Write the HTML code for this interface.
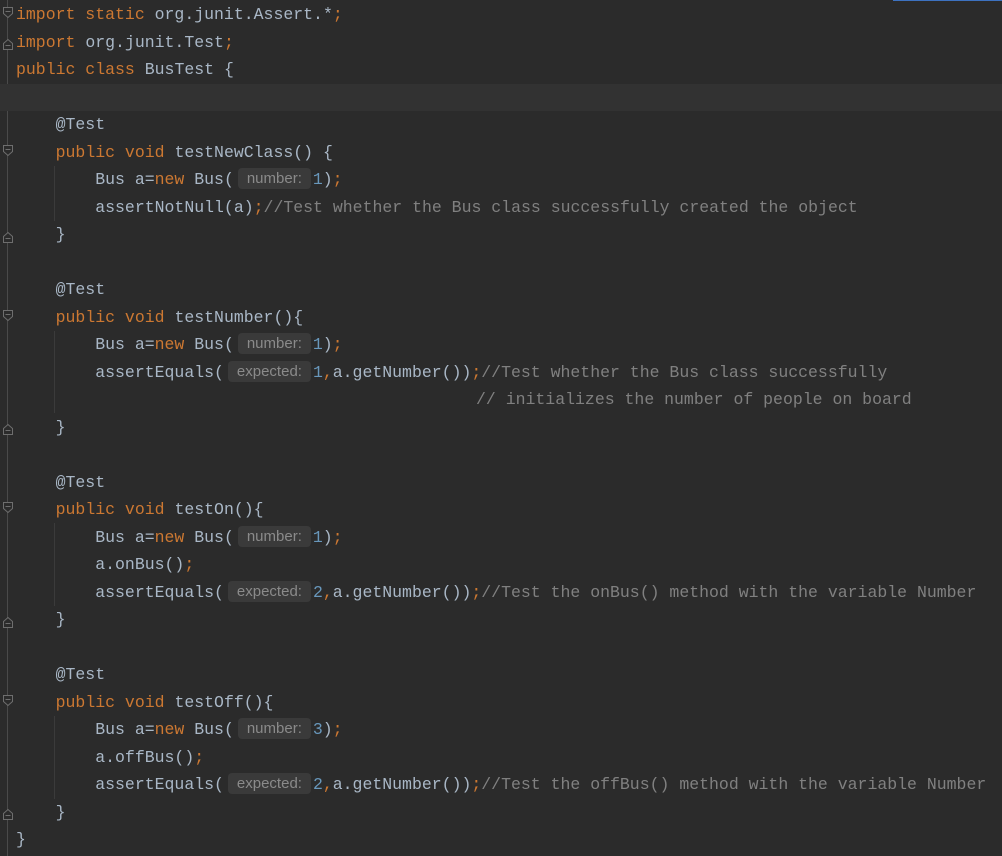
<!DOCTYPE html>
<html><head><meta charset="utf-8"><style>
html,body{margin:0;padding:0;background:#2b2b2b;width:1002px;height:856px;overflow:hidden}
#ed{position:absolute;left:0;top:1px;width:1002px;font-family:"Liberation Mono","DejaVu Sans Mono",monospace;font-size:16.5px;color:#a9b7c6}
.l{height:27.5px;line-height:27.5px;white-space:pre;padding-left:16px;position:relative}
.hl{background:#323232}
.k{color:#cc7832}.c{color:#808080}.n{color:#6897bb}
.h{display:inline-block;height:21px;line-height:21px;vertical-align:1px;background:#3a3a3a;color:#8a8a8a;border-radius:4px;font-family:"Liberation Sans","DejaVu Sans",sans-serif;font-size:15px;text-align:center;margin:0 2px 0 4px}
.hn{width:73px}.he{width:83px}
.g{position:absolute;left:54px;width:1px;background:#3b3b3b}
.gut{position:absolute;left:7px;top:0;width:1px;height:856px;background:#4a4a4a}
.f{position:absolute;left:3px}
</style></head><body>
<div class="gut"></div>
<div style="position:absolute;left:893px;top:0;width:109px;height:1px;background:#3d72c0"></div>
<div id="ed">
<div class="l"><span class="k">import static </span>org.junit.Assert.*<span class="k">;</span></div>
<div class="l"><span class="k">import </span>org.junit.Test<span class="k">;</span></div>
<div class="l"><span class="k">public class </span>BusTest {</div>
<div class="l hl"> </div>
<div class="l">    @Test</div>
<div class="l">    <span class="k">public void </span>testNewClass() {</div>
<div class="l">        Bus a=<span class="k">new </span>Bus(<span class="h hn">number:</span><span class="n">1</span>)<span class="k">;</span></div>
<div class="l">        assertNotNull(a)<span class="k">;</span><span class="c">//Test whether the Bus class successfully created the object</span></div>
<div class="l">    }</div>
<div class="l"> </div>
<div class="l">    @Test</div>
<div class="l">    <span class="k">public void </span>testNumber(){</div>
<div class="l">        Bus a=<span class="k">new </span>Bus(<span class="h hn">number:</span><span class="n">1</span>)<span class="k">;</span></div>
<div class="l">        assertEquals(<span class="h he">expected:</span><span class="n">1</span><span class="k">,</span>a.getNumber())<span class="k">;</span><span class="c">//Test whether the Bus class successfully</span></div>
<div class="l"><span class="c" style="position:absolute;left:476px">// initializes the number of people on board</span></div>
<div class="l">    }</div>
<div class="l"> </div>
<div class="l">    @Test</div>
<div class="l">    <span class="k">public void </span>testOn(){</div>
<div class="l">        Bus a=<span class="k">new </span>Bus(<span class="h hn">number:</span><span class="n">1</span>)<span class="k">;</span></div>
<div class="l">        a.onBus()<span class="k">;</span></div>
<div class="l">        assertEquals(<span class="h he">expected:</span><span class="n">2</span><span class="k">,</span>a.getNumber())<span class="k">;</span><span class="c">//Test the onBus() method with the variable Number</span></div>
<div class="l">    }</div>
<div class="l"> </div>
<div class="l">    @Test</div>
<div class="l">    <span class="k">public void </span>testOff(){</div>
<div class="l">        Bus a=<span class="k">new </span>Bus(<span class="h hn">number:</span><span class="n">3</span>)<span class="k">;</span></div>
<div class="l">        a.offBus()<span class="k">;</span></div>
<div class="l">        assertEquals(<span class="h he">expected:</span><span class="n">2</span><span class="k">,</span>a.getNumber())<span class="k">;</span><span class="c">//Test the offBus() method with the variable Number</span></div>
<div class="l">    }</div>
<div class="l">}</div>
</div>
<!-- indent guides -->
<div class="g" style="top:166px;height:55px"></div>
<div class="g" style="top:331px;height:82px"></div>
<div class="g" style="top:523px;height:83px"></div>
<div class="g" style="top:716px;height:83px"></div>
<!-- fold markers -->
<svg width="16" height="856" style="position:absolute;left:0;top:0" fill="#2b2b2b" stroke="#6e6e6e" stroke-width="1">
<g id="d"><path d="M3.5 7.5h9v6l-4.5 4l-4.5-4z"/><path d="M5.5 11.5h5"/></g>
<path d="M3.5 49.5h9v-6l-4.5-4l-4.5 4z"/><path d="M5.5 45.5h5"/>
<g transform="translate(0,138)"><path d="M3.5 7.5h9v6l-4.5 4l-4.5-4z"/><path d="M5.5 11.5h5"/></g>
<g transform="translate(0,303)"><path d="M3.5 7.5h9v6l-4.5 4l-4.5-4z"/><path d="M5.5 11.5h5"/></g>
<g transform="translate(0,495)"><path d="M3.5 7.5h9v6l-4.5 4l-4.5-4z"/><path d="M5.5 11.5h5"/></g>
<g transform="translate(0,688)"><path d="M3.5 7.5h9v6l-4.5 4l-4.5-4z"/><path d="M5.5 11.5h5"/></g>
<g transform="translate(0,193)"><path d="M3.5 49.5h9v-6l-4.5-4l-4.5 4z"/><path d="M5.5 45.5h5"/></g>
<g transform="translate(0,385)"><path d="M3.5 49.5h9v-6l-4.5-4l-4.5 4z"/><path d="M5.5 45.5h5"/></g>
<g transform="translate(0,578)"><path d="M3.5 49.5h9v-6l-4.5-4l-4.5 4z"/><path d="M5.5 45.5h5"/></g>
<g transform="translate(0,770)"><path d="M3.5 49.5h9v-6l-4.5-4l-4.5 4z"/><path d="M5.5 45.5h5"/></g>
</svg>
</body></html>
